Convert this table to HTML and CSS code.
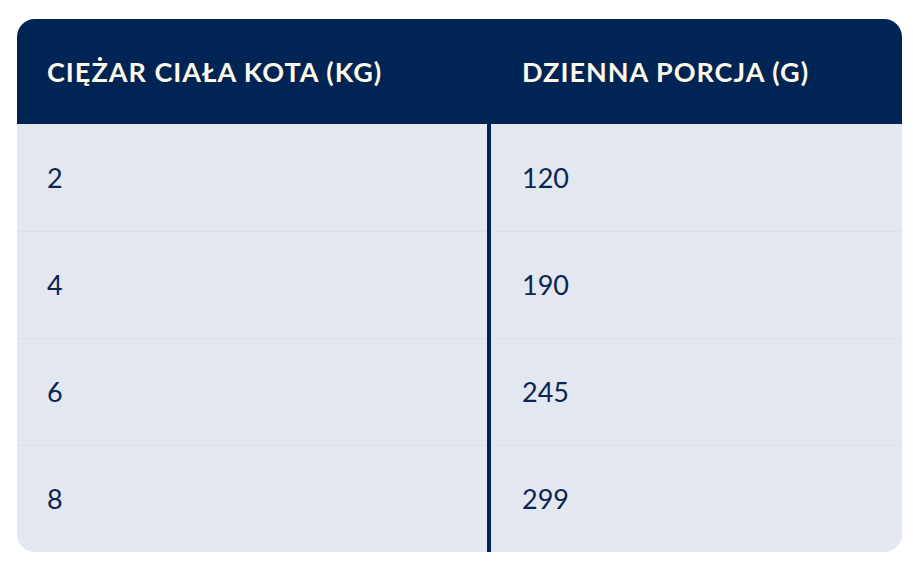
FILE: index.html
```html
<!DOCTYPE html>
<html lang="pl">
<head>
<meta charset="utf-8">
<link rel="stylesheet" href="styles.css">
</head>
<body>
<div class="page">
  <table class="portions">
    <thead>
      <tr>
        <th class="col-left">CIĘŻAR CIAŁA KOTA (KG)</th>
        <th class="col-right">DZIENNA PORCJA (G)</th>
      </tr>
    </thead>
    <tbody>
      <tr><td class="col-left">2</td><td class="col-right">120</td></tr>
      <tr><td class="col-left">4</td><td class="col-right">190</td></tr>
      <tr><td class="col-left">6</td><td class="col-right">245</td></tr>
      <tr><td class="col-left">8</td><td class="col-right">299</td></tr>
    </tbody>
  </table>
</div>
</body>
</html>
```
FILE: styles.css
```css
html, body {
  margin: 0;
  padding: 0;
  background: #ffffff;
}
.page {
  padding: 19px 11px 0 17px;
}
.portions {
  width: 885px;
  table-layout: fixed;
  border-collapse: separate;
  border-spacing: 0;
  border-radius: 18px;
  overflow: hidden;
  background: #e3e8f0;
  font-family: Lato, "Open Sans", sans-serif;
  color: #0b2550;
}
.portions th {
  background: #002454;
  color: #fff9e8;
  font-weight: 700;
  font-size: 27px;
  text-align: left;
  height: 105px;
  padding: 0;
  vertical-align: middle;
  letter-spacing: 1px;
  white-space: nowrap;
}
.portions td {
  height: 107px;
  padding: 0;
  font-size: 27px;
  font-weight: 400;
  vertical-align: middle;
  box-shadow: inset 0 1px 0 #dbe1ea;
}
.portions tbody tr:first-child td {
  box-shadow: none;
}
.portions .col-left {
  width: 440px;
  padding-left: 30px;
  border-right: 4px solid #002454;
}
.portions .col-right {
  padding-left: 31px;
}
```
